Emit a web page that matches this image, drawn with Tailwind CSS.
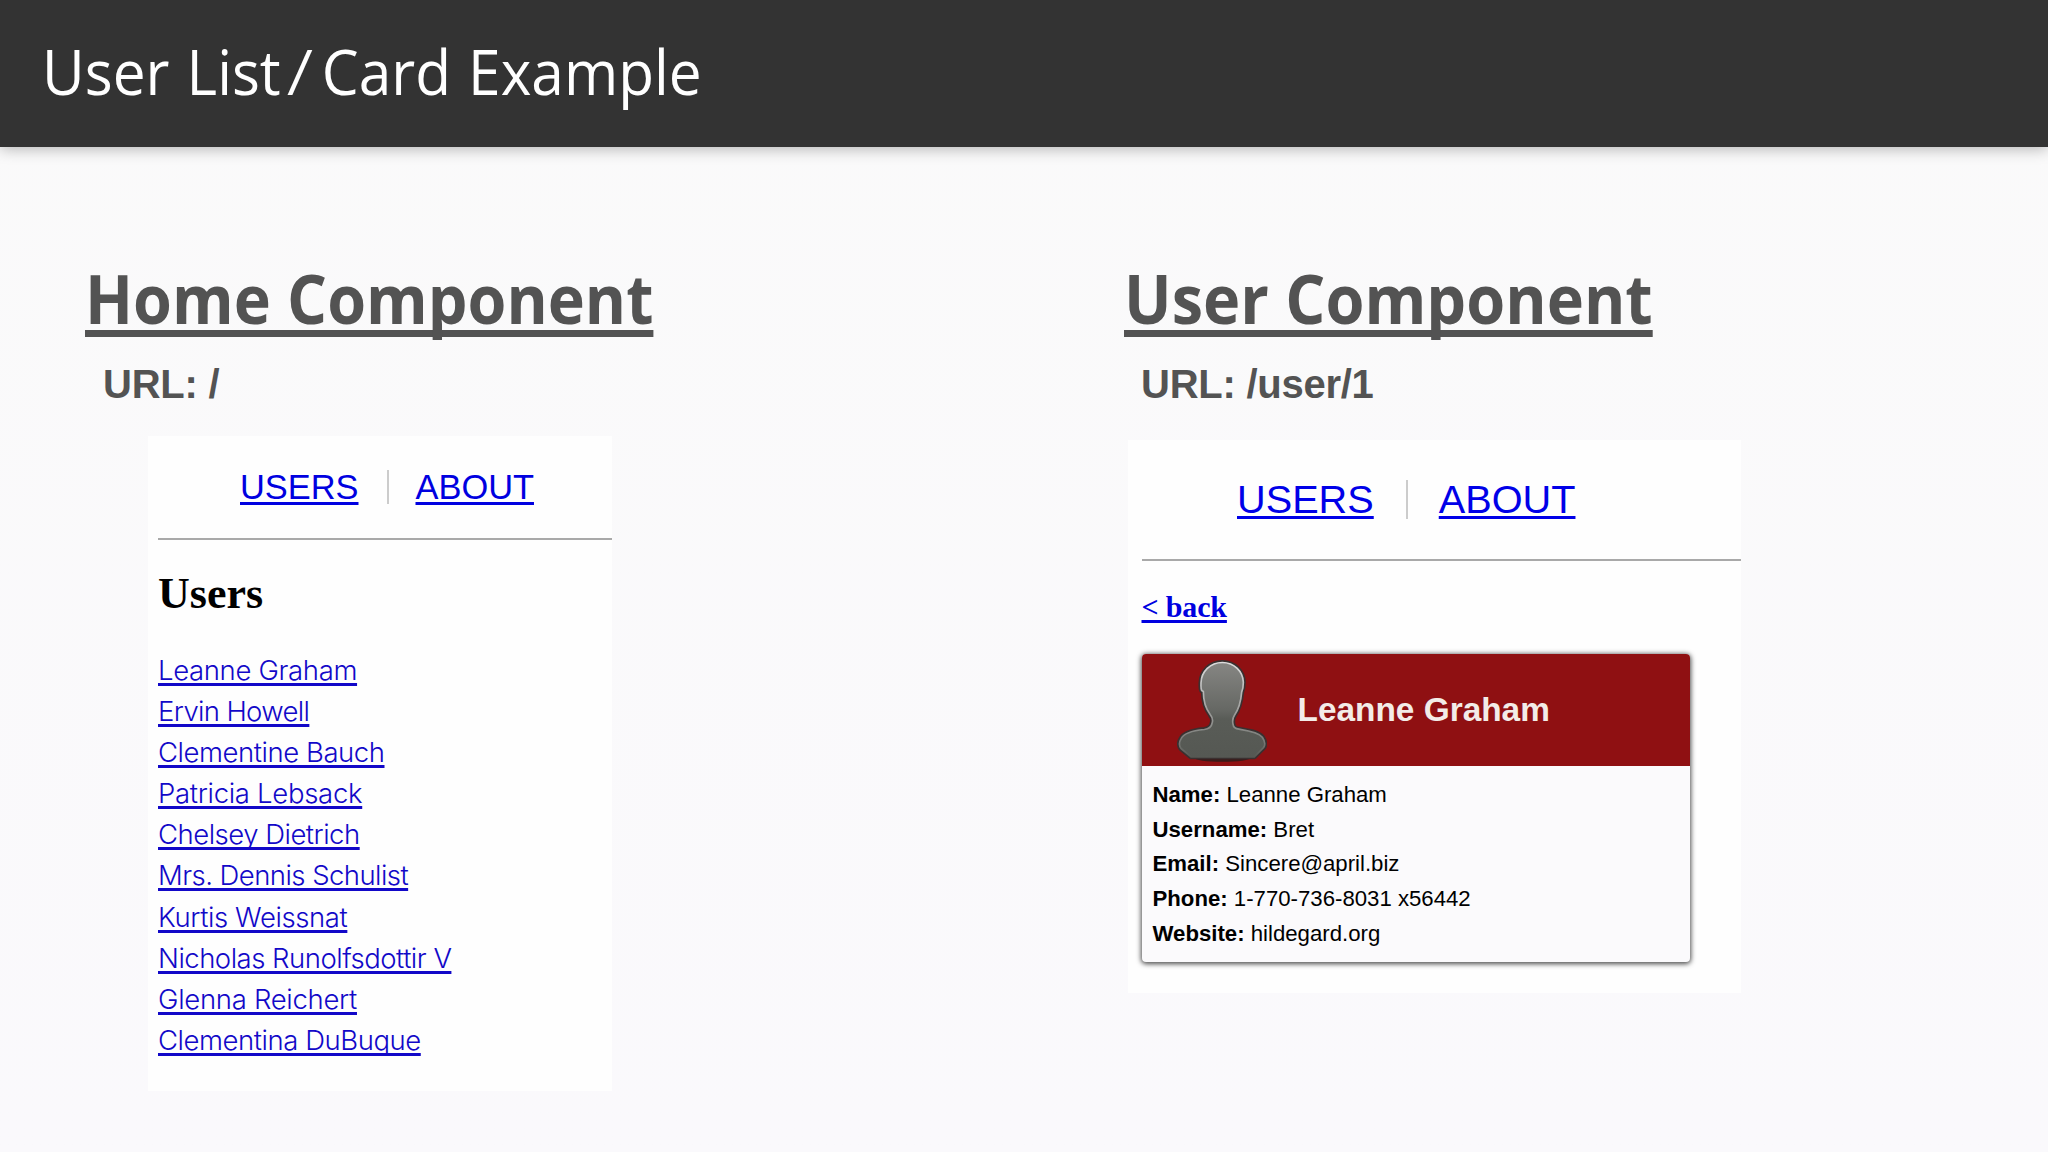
<!DOCTYPE html>
<html lang="en">
<head>
    <meta charset="UTF-8">
    <title>User List/Card Example</title>
    <script src="https://cdn.jsdelivr.net/npm/@tailwindcss/browser@4"></script>
</head>
<body class="h-[1152px] overflow-hidden bg-linear-to-b from-[#fafafa] to-[#faf9fc] font-['Liberation_Sans',sans-serif]">

    <!-- Header -->
    <header class="h-[147px] bg-[#333333] pt-[30.5px] pl-[42px] shadow-[0_2px_14px_rgba(0,0,0,0.28)]">
        <h1 class="w-fit origin-left scale-x-[0.93] whitespace-nowrap text-[63px] leading-[80px] font-[440] [word-spacing:2px] text-white font-['Open_Sans',sans-serif]">User List<span class="mr-[12px] ml-[9px] inline-block -skew-x-6">/</span>Card Example</h1>
    </header>

    <main class="flex pt-[111px]">
        <!-- Home Component -->
        <section class="w-[1039px] pl-[85px]">
            <h2 class="w-fit origin-left scale-x-[0.924] whitespace-nowrap text-[68px] leading-[80px] font-bold text-[#535353] underline decoration-[6.5px] underline-offset-[6px] [text-decoration-skip-ink:none] font-['Open_Sans',sans-serif]">Home Component</h2>
            <p class="mt-[22px] ml-[18px] w-fit text-[40px] leading-[48px] tracking-[-0.25px] font-bold text-[#535353]">URL: /</p>

            <div class="mt-[28px] ml-[63px] h-[655px] w-[464px] bg-[#fefefe] pt-[31px] pl-[10px]">
                <nav class="flex pl-[82px] text-[34.4px] leading-[40px] text-[#0000e0]">
                    <a class="underline decoration-[2.5px] underline-offset-[3px]">USERS</a>
                    <span class="mt-[3px] ml-[28px] h-[34px] w-[2px] bg-[#cccccc]"></span>
                    <a class="ml-[27px] underline decoration-[2.5px] underline-offset-[3px]">ABOUT</a>
                </nav>
                <hr class="mt-[31px] border-t-2 border-[#a9a9a9]">
                <h3 class="mt-[29px] w-fit text-[44px] leading-[50px] font-bold text-black font-['Liberation_Serif',serif]">Users</h3>
                <ul class="mt-[30.6px] w-fit text-[27.5px] leading-[41.15px] font-light text-[#1208c8] font-['Inter',sans-serif]">
                    <li><a class="tracking-[-0.35px] underline decoration-[2.5px] underline-offset-[3px] [text-decoration-skip-ink:none]">Leanne Graham</a></li>
                    <li><a class="tracking-[-0.65px] underline decoration-[2.5px] underline-offset-[3px] [text-decoration-skip-ink:none]">Ervin Howell</a></li>
                    <li><a class="tracking-[-0.45px] underline decoration-[2.5px] underline-offset-[3px] [text-decoration-skip-ink:none]">Clementine Bauch</a></li>
                    <li><a class="tracking-[-0.3px] underline decoration-[2.5px] underline-offset-[3px] [text-decoration-skip-ink:none]">Patricia Lebsack</a></li>
                    <li><a class="tracking-[-0.5px] underline decoration-[2.5px] underline-offset-[3px] [text-decoration-skip-ink:none]">Chelsey Dietrich</a></li>
                    <li><a class="tracking-[-0.55px] underline decoration-[2.5px] underline-offset-[3px] [text-decoration-skip-ink:none]">Mrs. Dennis Schulist</a></li>
                    <li><a class="tracking-[-0.4px] underline decoration-[2.5px] underline-offset-[3px] [text-decoration-skip-ink:none]">Kurtis Weissnat</a></li>
                    <li><a class="tracking-[-0.5px] underline decoration-[2.5px] underline-offset-[3px] [text-decoration-skip-ink:none]">Nicholas Runolfsdottir V</a></li>
                    <li><a class="tracking-[-0.3px] underline decoration-[2.5px] underline-offset-[3px] [text-decoration-skip-ink:none]">Glenna Reichert</a></li>
                    <li><a class="tracking-[-0.45px] underline decoration-[2.5px] underline-offset-[3px] [text-decoration-skip-ink:none]">Clementina DuBuque</a></li>
                </ul>
            </div>
        </section>

        <!-- User Component -->
        <section class="pl-[85px]">
            <h2 class="w-fit origin-left scale-x-[0.927] whitespace-nowrap text-[68px] leading-[80px] font-bold text-[#535353] underline decoration-[6.5px] underline-offset-[6px] [text-decoration-skip-ink:none] font-['Open_Sans',sans-serif]">User Component</h2>
            <p class="mt-[22px] ml-[17px] w-fit text-[40px] leading-[48px] tracking-[-0.25px] font-bold text-[#535353]">URL: /user/1</p>

            <div class="mt-[32px] ml-[4px] h-[553px] w-[613px] bg-[#fefefe] pt-[38.5px] pl-[13.5px]">
                <nav class="flex pl-[95.5px] text-[39.7px] leading-[40px] text-[#0000e8]">
                    <a class="underline decoration-[3px] underline-offset-[3px]">USERS</a>
                    <span class="mt-px ml-[32px] h-[39px] w-[2px] bg-[#cccccc]"></span>
                    <a class="ml-[31px] underline decoration-[3px] underline-offset-[3px]">ABOUT</a>
                </nav>
                <hr class="mt-[40.5px] border-t-2 border-[#a9a9a9]">
                <a class="mt-[26px] block w-fit text-[30px] leading-[40px] tracking-[-0.15px] font-bold text-[#0000e0] underline decoration-[2.5px] underline-offset-[3px] font-['Liberation_Serif',serif]">&lt; back</a>

                <div class="mt-[27px] h-[308px] w-[548px] overflow-hidden rounded-[4px] bg-[#fbfafc] shadow-[0_1px_5px_1px_rgba(0,0,0,0.7)]">
                    <div class="flex h-[112px] items-center bg-[#8f1012] pl-[35px]">
                        <svg class="h-[107px] w-[90px]" viewBox="140 55 270 320">
                            <defs>
                                <linearGradient id="body" x1="0" y1="0" x2="0" y2="1">
                                    <stop offset="0" stop-color="#868683"/>
                                    <stop offset="0.5" stop-color="#666864"/>
                                    <stop offset="0.6" stop-color="#595c57"/>
                                    <stop offset="1" stop-color="#555853"/>
                                </linearGradient>
                                <linearGradient id="rim" x1="0" y1="0" x2="0" y2="1">
                                    <stop offset="0" stop-color="#dcdcdc"/>
                                    <stop offset="0.5" stop-color="#a0a19f"/>
                                    <stop offset="0.85" stop-color="#777975"/>
                                    <stop offset="1" stop-color="#555853"/>
                                </linearGradient>
                            </defs>
                            <ellipse cx="276" cy="357" rx="85" ry="12" fill="#3b1a19"/>
                            <path d="M276 71C240 71 213 98 212 132C212 142 211 150 214 155L219 158C219 185 228 212 240 228C248 238 248 246 245 254C243 266 236 270 222 272C190 275 160 282 152 300C145 312 147 322 152 329L182 354H372L400 326C406 317 402 304 396 295C384 280 350 275 326 271C314 270 309 266 308 256C306 246 305 240 312 230C326 210 332 185 334 160C338 150 339 140 339 130C338 98 312 71 276 71Z" fill="none" stroke="#3a3030" stroke-width="15" stroke-linejoin="round"/>
                            <path d="M276 71C240 71 213 98 212 132C212 142 211 150 214 155L219 158C219 185 228 212 240 228C248 238 248 246 245 254C243 266 236 270 222 272C190 275 160 282 152 300C145 312 147 322 152 329L182 354H372L400 326C406 317 402 304 396 295C384 280 350 275 326 271C314 270 309 266 308 256C306 246 305 240 312 230C326 210 332 185 334 160C338 150 339 140 339 130C338 98 312 71 276 71Z" fill="url(#body)" stroke="url(#rim)" stroke-width="5" stroke-linejoin="round"/>
                        </svg>
                        <h4 class="ml-[31px] text-[33.4px] leading-[40px] font-bold text-[#f3ece8]">Leanne Graham</h4>
                    </div>
                    <div class="pt-[12px] pl-[11px] text-[22.2px] leading-[34.7px] text-black">
                        <p><b>Name:</b> Leanne Graham</p>
                        <p><b>Username:</b> Bret</p>
                        <p><b>Email:</b> Sincere@april.biz</p>
                        <p><b>Phone:</b> 1-770-736-8031 x56442</p>
                        <p><b>Website:</b> hildegard.org</p>
                    </div>
                </div>
            </div>
        </section>
    </main>
</body>
</html>
